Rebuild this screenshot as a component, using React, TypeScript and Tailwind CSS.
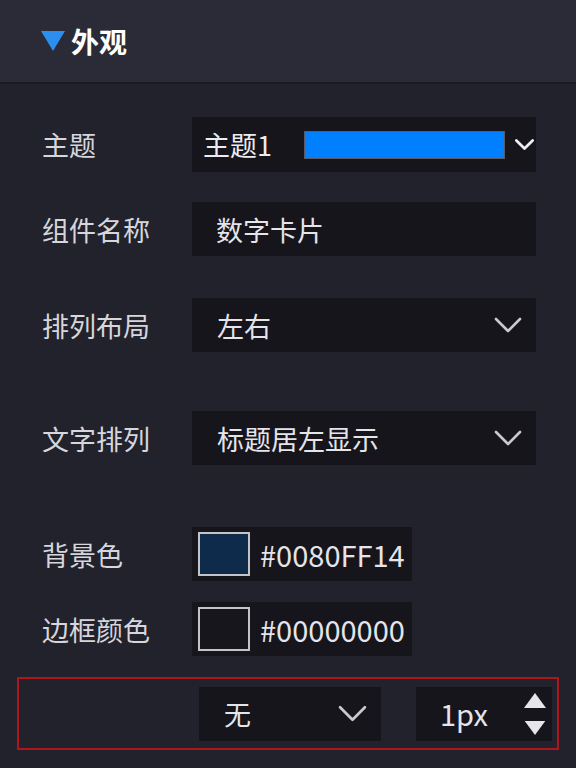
import { ReactNode } from "react";

const FONT = { fontFamily: '"Microsoft YaHei", "Noto Sans CJK SC", "Noto Sans", sans-serif' };

function Chevron({ className, weight = 2.6 }: { className?: string; weight?: number }) {
  return (
    <svg viewBox="0 0 28 16" className={className} fill="none" aria-hidden="true">
      <path d="M2 2 L14 14 L26 2" stroke="currentColor" strokeWidth={weight} strokeLinecap="round" strokeLinejoin="round" />
    </svg>
  );
}

function Row({ label, top, children }: { label: string; top: string; children: ReactNode }) {
  return (
    <div className={`flex items-center ${top}`}>
      <span className="w-[150px] shrink-0 text-[27px] leading-none text-[#d6d6dc]">{label}</span>
      {children}
    </div>
  );
}

function Select({ value, width }: { value: string; width: string }) {
  return (
    <div className={`flex h-[54px] ${width} items-center justify-between bg-[#15151b] pl-[25px] pr-[14px]`}>
      <span className="text-[27px] leading-none text-[#e4e4ea]">{value}</span>
      <Chevron className="h-[16px] w-[28px] text-[#c9c9cf]" />
    </div>
  );
}

function ColorField({ swatch, value }: { swatch: string; value: string }) {
  return (
    <div className="flex h-[54px] w-[220px] items-center gap-[10px] bg-[#15151b] pl-[6px]">
      <span className={`h-[44px] w-[52px] border-2 border-[#c4c4c8] ${swatch}`} />
      <span className="text-[29px] leading-none text-[#e4e4ea]">{value}</span>
    </div>
  );
}

export default function App() {
  return (
    <div style={FONT} className="h-[768px] w-[576px] overflow-hidden bg-[#22222c]">
      <div className="flex h-[84px] items-center gap-[6px] border-b-2 border-[#1a1a21] bg-[#2b2b37] pl-[41px]">
        <svg viewBox="0 0 24 20" className="h-[20px] w-[24px]" aria-hidden="true">
          <path d="M0 0 H24 L12 20 Z" fill="#2c8ff0" />
        </svg>
        <span className="text-[28px] font-bold leading-none text-white">外观</span>
      </div>

      <div className="flex flex-col pl-[42px]">
        <Row label="主题" top="mt-[33px]">
          <div className="flex h-[55px] w-[344px] items-center bg-[#15151b] pl-[11px]">
            <span className="w-[101px] text-[27px] leading-none text-[#ececf0]">主题1</span>
            <span className="h-[28px] w-[201px] border border-[#5a5a66] bg-[#0080ff]" />
            <Chevron weight={4} className="ml-[10px] h-[11px] w-[19px] text-[#ececf2]" />
          </div>
        </Row>

        <Row label="组件名称" top="mt-[30px]">
          <div className="flex h-[54px] w-[344px] items-center bg-[#15151b] pl-[24px]">
            <span className="text-[27px] leading-none text-[#e4e4ea]">数字卡片</span>
          </div>
        </Row>

        <Row label="排列布局" top="mt-[42px]">
          <Select value="左右" width="w-[344px]" />
        </Row>

        <Row label="文字排列" top="mt-[59px]">
          <Select value="标题居左显示" width="w-[344px]" />
        </Row>

        <Row label="背景色" top="mt-[62px]">
          <ColorField swatch="bg-[#0e2b4c]" value="#0080FF14" />
        </Row>

        <Row label="边框颜色" top="mt-[21px]">
          <ColorField swatch="bg-[#16161c]" value="#00000000" />
        </Row>
      </div>

      <div className="ml-[17px] mt-[21px] flex h-[73px] w-[542px] items-center border-2 border-[#ad161d] pl-[180px]">
        <div className="flex h-[54px] w-[182px] items-center justify-between bg-[#15151b] pl-[25px] pr-[14px]">
          <span className="text-[27px] leading-none text-[#e4e4ea]">无</span>
          <Chevron className="h-[17px] w-[29px] text-[#c9c9cf]" />
        </div>
        <div className="ml-[35px] flex h-[54px] w-[136px] items-center justify-between bg-[#15151b] pl-[24px] pr-[6px]">
          <span className="text-[29px] leading-none text-[#e4e4ea]">1px</span>
          <div className="flex flex-col gap-[13px]">
            <svg viewBox="0 0 22 15" className="h-[15px] w-[22px]" aria-hidden="true">
              <path d="M11 0 L22 15 H0 Z" fill="#e6e6ea" />
            </svg>
            <svg viewBox="0 0 22 15" className="h-[14px] w-[22px]" aria-hidden="true">
              <path d="M0 0 H22 L11 15 Z" fill="#e6e6ea" />
            </svg>
          </div>
        </div>
      </div>
    </div>
  );
}
